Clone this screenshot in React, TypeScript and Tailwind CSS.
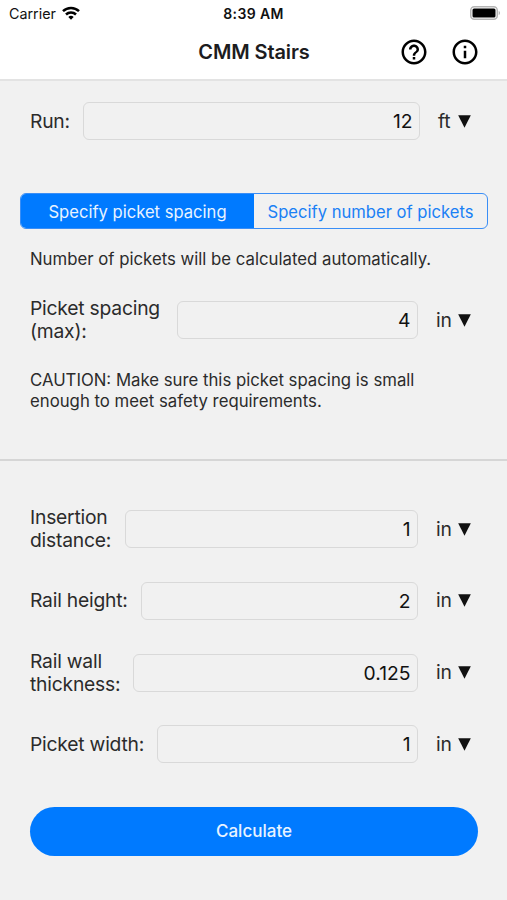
import { useState } from "react";
import { MdHelpOutline, MdOutlineInfo } from "react-icons/md";

type FieldProps = {
  label: string;
  labelClass: string;
  value: string;
  unit: string;
  unitClass?: string;
};

function Field({ label, labelClass, value, unit, unitClass = "w-[60px] gap-[6px]" }: FieldProps) {
  const [text, setText] = useState(value);

  return (
    <div className="flex h-[46px] items-center pl-[30px]">
      <label className={`shrink-0 text-[19.3px] leading-[23px] tracking-[-0.22px] ${labelClass}`}>{label}</label>
      <input
        aria-label={label}
        className="h-[38px] min-w-0 flex-1 rounded-md border border-[#d9d9d9] bg-transparent pr-[6.5px] text-right text-[19.3px] text-[#111]"
        value={text}
        onChange={(e) => setText(e.target.value)}
      />
      <button className={`ml-[18px] mr-[11px] flex shrink-0 items-center text-[19.3px] tracking-[-0.25px] ${unitClass}`}>
        <span>{unit}</span>
        <svg width="13" height="13" viewBox="0 0 13 13" fill="#111">
          <path d="M0.2 0.2h12.6L6.5 12.8z" />
        </svg>
      </button>
    </div>
  );
}

function StatusBar() {
  return (
    <div className="flex h-[27px] items-center px-[9px] text-[#111]">
      <div className="flex flex-1 items-center gap-[6px]">
        <span className="text-[14.3px]">Carrier</span>
        <svg className="-mt-px" width="18" height="14" viewBox="0 0 18 14" fill="none" stroke="#000" strokeWidth="2.5">
          <path d="M1 5.2a11.4 11.4 0 0 1 16 0" />
          <path d="M4 8.5a7.1 7.1 0 0 1 10 0" />
          <path d="M9 13.7 6.3 11a3.8 3.8 0 0 1 5.4 0z" fill="#000" stroke="none" />
        </svg>
      </div>
      <span className="text-[14px] font-semibold tracking-[0.35px]">8:39 AM</span>
      <div className="flex flex-1 justify-end">
        <svg className="-mr-[3px] -mt-px" width="31" height="14" viewBox="0 0 31 14">
          <rect x="0.75" y="0.75" width="26.5" height="12.5" rx="3.5" fill="#fff" stroke="#b5b5b5" strokeWidth="1.5" />
          <rect x="2.5" y="2.5" width="23" height="9" rx="1.5" fill="#000" />
          <path d="M28.7 5c1.7.5 1.7 3.500 0 4z" fill="#b5b5b5" />
        </svg>
      </div>
    </div>
  );
}

export default function App() {
  const [mode, setMode] = useState<"spacing" | "count">("spacing");
  const active = "bg-[#007aff] text-[#e8f3ff]";
  const inactive = "text-[#1a80f5]";

  return (
    <div className="h-[900px] w-[507px] overflow-hidden bg-[#f1f1f1] font-['Inter',sans-serif] text-[#2b2b2b]">
      <header className="h-[81px] border-b-2 border-[#e3e3e3] bg-white">
        <StatusBar />
        <div className="grid h-[50px] grid-cols-[1fr_auto_1fr] items-center">
          <h1 className="col-start-2 pl-px text-[20px] font-semibold tracking-[-0.1px] text-[#1c1c1e]">CMM Stairs</h1>
          <div className="flex justify-end gap-[21px] pr-[27px] text-[30px] text-black">
            <MdHelpOutline />
            <MdOutlineInfo />
          </div>
        </div>
      </header>

      <main>
        <section className="h-[380px] border-b-2 border-[#d6d6d6] pt-[17px]">
          <Field label="Run:" labelClass="w-[52.5px]" value="12" unit="ft" unitClass="w-[58px] gap-[7.5px]" />

          <div className="ml-5 mr-[19px] mt-[49px] flex h-[36px] overflow-hidden rounded-md border-[1.5px] border-[#3a8ef6] text-[16.6px]">
            <button className={`w-1/2 pt-[2px] ${mode === "spacing" ? active : inactive}`} onClick={() => setMode("spacing")}>
              Specify picket spacing
            </button>
            <button className={`w-1/2 pt-[2px] ${mode === "count" ? active : inactive}`} onClick={() => setMode("count")}>
              Specify number of pickets
            </button>
          </div>

          <p className="mt-[20px] pl-[30px] text-[16.75px] leading-[21px]">
            Number of pickets will be calculated automatically.
          </p>

          <div className="mt-[27px]">
            <Field label="Picket spacing (max):" labelClass="w-[146.5px]" value="4" unit="in" />
          </div>

          <p className="mt-[27px] w-[445px] pl-[30px] text-[16.75px] leading-[21px]">
            CAUTION: Make sure this picket spacing is small enough to meet safety requirements.
          </p>
        </section>

        <section className="flex flex-col gap-[25.8px] pt-[45px]">
          <Field label="Insertion distance:" labelClass="w-[94.5px]" value="1" unit="in" />
          <Field label="Rail height:" labelClass="w-[110.5px]" value="2" unit="in" />
          <Field label="Rail wall thickness:" labelClass="w-[102.5px]" value="0.125" unit="in" />
          <Field label="Picket width:" labelClass="w-[126.5px]" value="1" unit="in" />
        </section>

        <button className="mx-[30px] mt-[39.6px] block h-[49px] w-[448px] rounded-full bg-[#007aff] pt-px text-[17px] font-medium text-[#e8f3ff]">
          Calculate
        </button>
      </main>
    </div>
  );
}
